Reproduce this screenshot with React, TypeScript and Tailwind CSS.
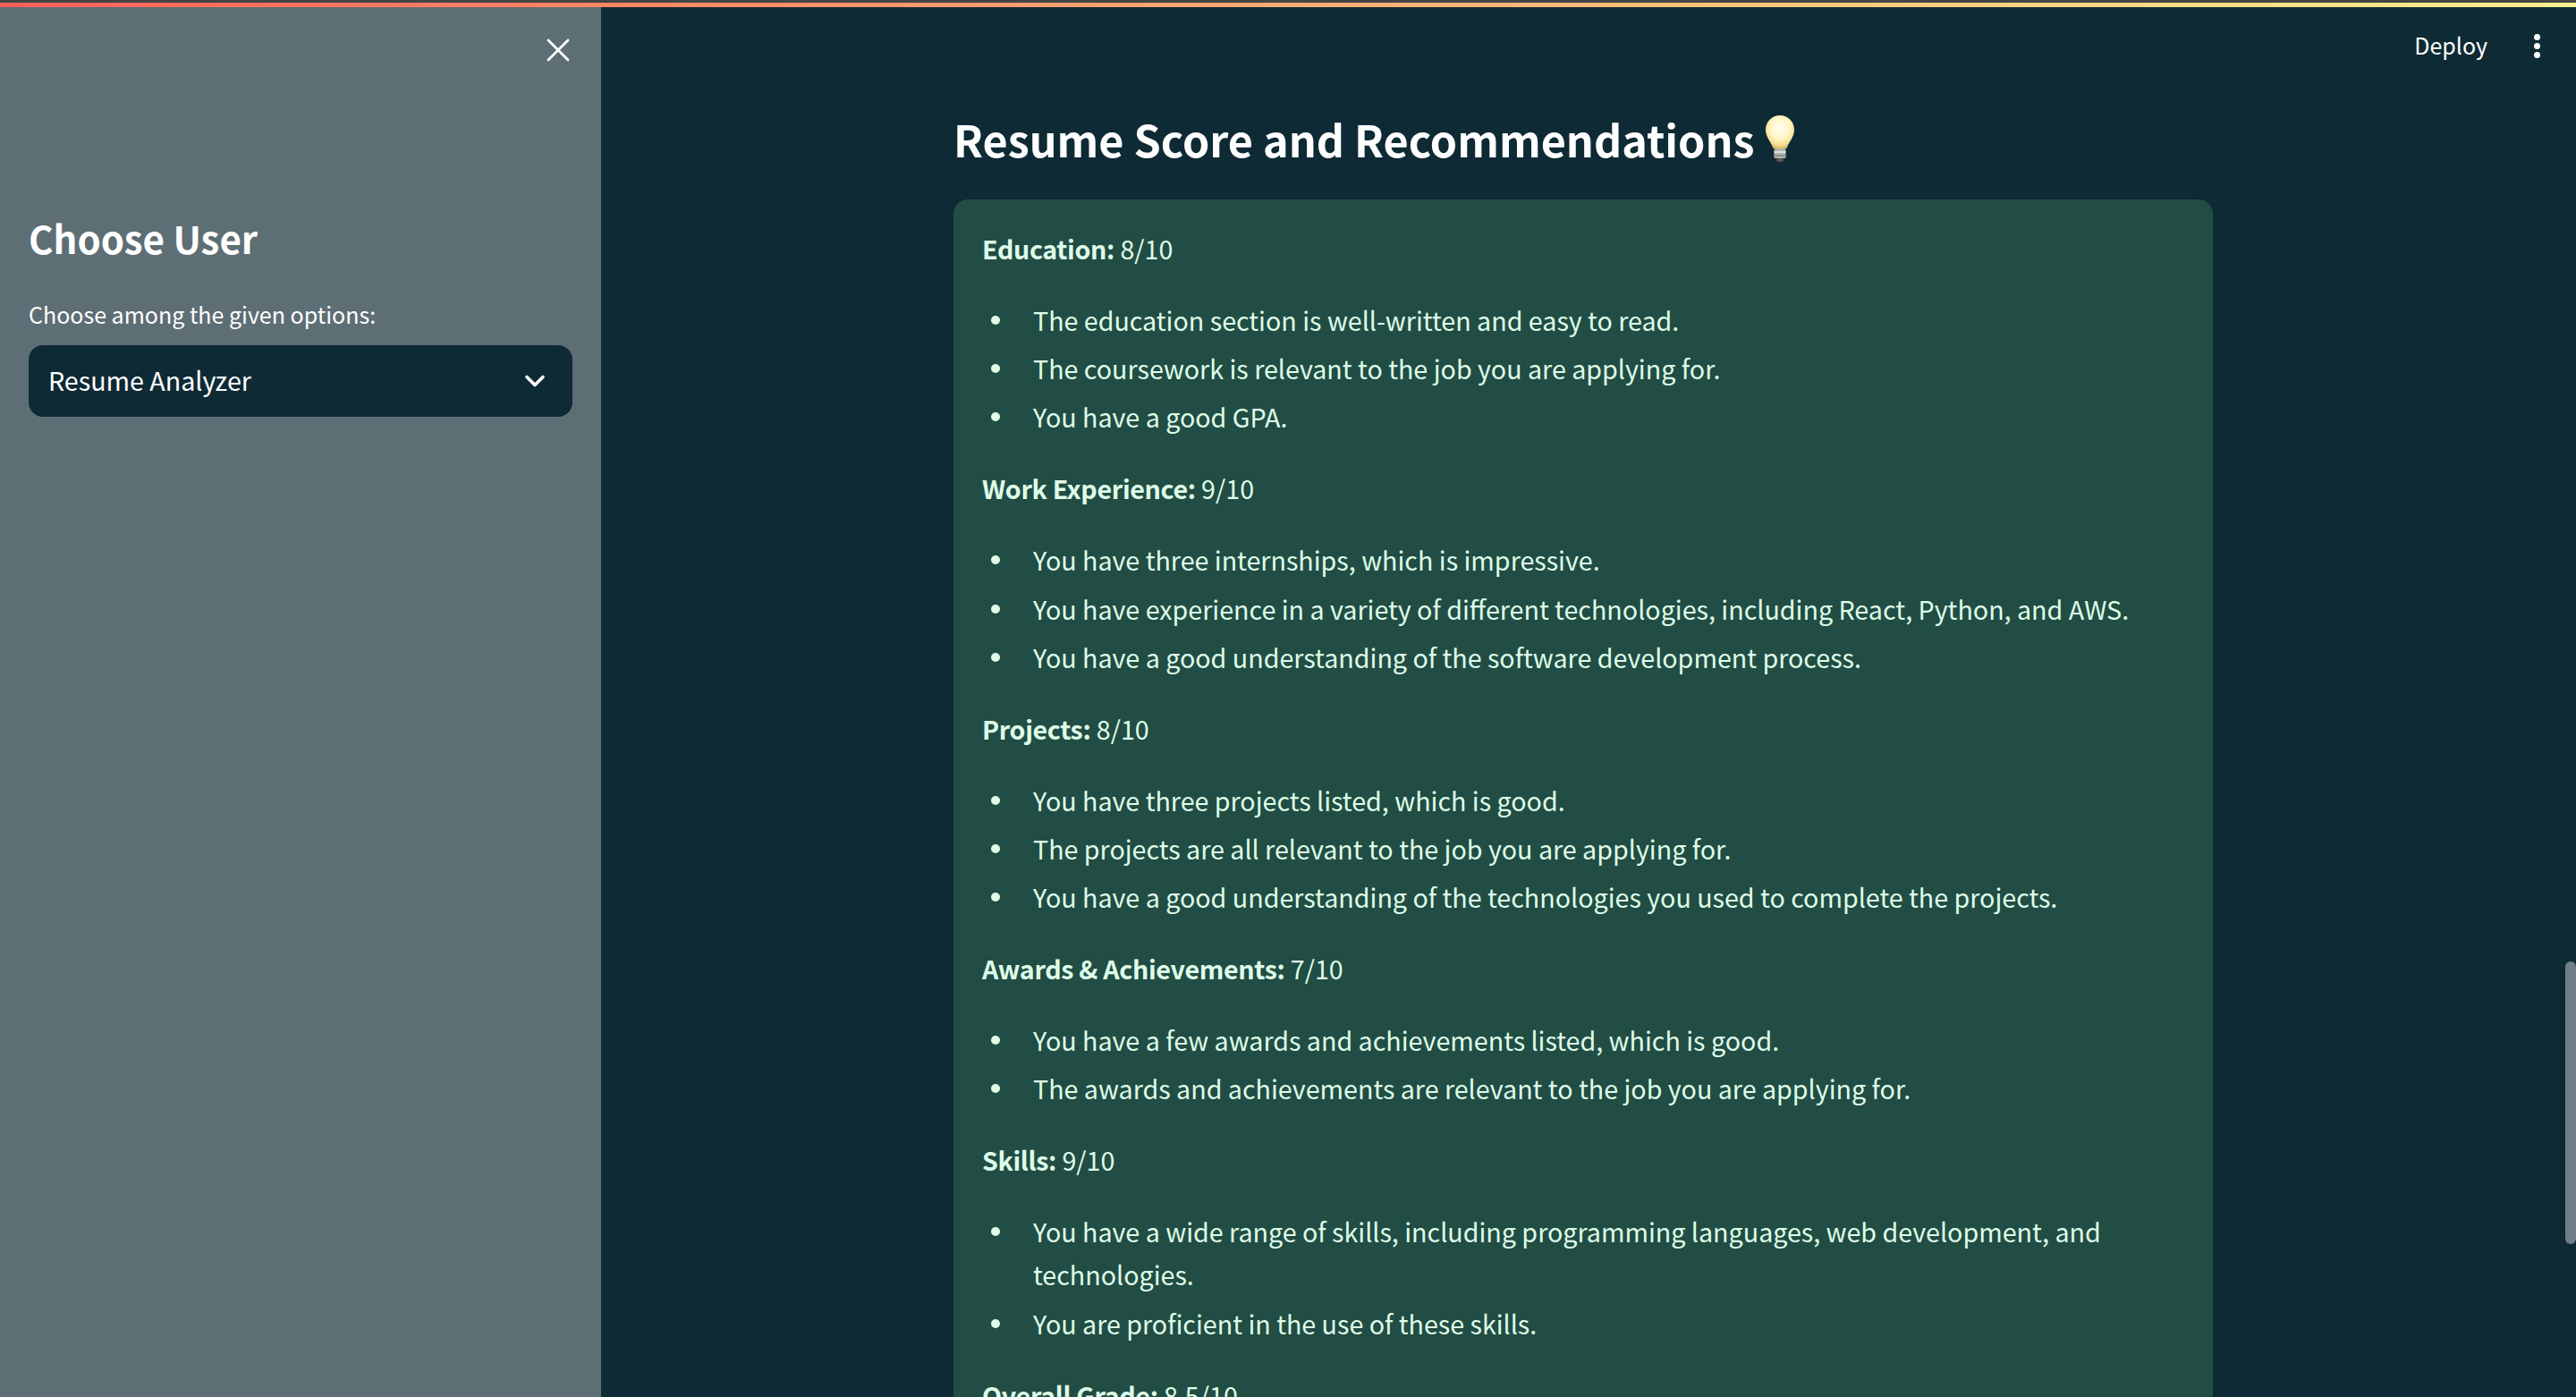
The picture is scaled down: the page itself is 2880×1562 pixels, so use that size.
import { ChevronDown, X } from "lucide-react";

const font = "font-['Noto_Sans_CJK_SC','Source_Sans_Pro',sans-serif]";

const sections = [
  {
    title: "Education:",
    score: "8/10",
    items: [
      "The education section is well-written and easy to read.",
      "The coursework is relevant to the job you are applying for.",
      "You have a good GPA.",
    ],
  },
  {
    title: "Work Experience:",
    score: "9/10",
    items: [
      "You have three internships, which is impressive.",
      "You have experience in a variety of different technologies, including React, Python, and AWS.",
      "You have a good understanding of the software development process.",
    ],
  },
  {
    title: "Projects:",
    score: "8/10",
    items: [
      "You have three projects listed, which is good.",
      "The projects are all relevant to the job you are applying for.",
      "You have a good understanding of the technologies you used to complete the projects.",
    ],
  },
  {
    title: "Awards & Achievements:",
    score: "7/10",
    items: [
      "You have a few awards and achievements listed, which is good.",
      "The awards and achievements are relevant to the job you are applying for.",
    ],
  },
  {
    title: "Skills:",
    score: "9/10",
    items: [
      "You have a wide range of skills, including programming languages, web development, and technologies.",
      "You are proficient in the use of these skills.",
    ],
  },
];

function Bulb() {
  return (
    <svg width="32" height="52" viewBox="0 0 32 52" className="ml-[12px] shrink-0">
      <defs>
        <radialGradient id="glass" cx="50%" cy="38%" r="62%">
          <stop offset="0%" stopColor="#fffef2" />
          <stop offset="55%" stopColor="#fff4c4" />
          <stop offset="85%" stopColor="#f6dd8e" />
          <stop offset="100%" stopColor="#d9b765" />
        </radialGradient>
      </defs>
      <path
        d="M16 0C7 0 0 7 0 16c0 8 5 12 8.5 21h15C27 28 32 24 32 16 32 7 25 0 16 0z"
        fill="url(#glass)"
      />
      <rect x="9.5" y="37" width="13" height="11" rx="1.5" fill="#b4b4ae" />
      <rect x="9.5" y="40" width="13" height="2" fill="#e0e0da" />
      <rect x="9.5" y="44" width="13" height="2" fill="#8f8f8a" />
      <rect x="12" y="48" width="8" height="4" rx="2" fill="#55544f" />
    </svg>
  );
}

export default function App() {
  return (
    <div className={`flex h-[1562px] flex-col overflow-hidden bg-[#0e2a35] text-white ${font}`}>
      <div className="h-[3px] bg-[#444444]" />
      <div className="h-[5px] bg-gradient-to-r from-[#f5605a] to-[#fdf08c]" />

      <div className="relative flex min-h-0 flex-1">
        {/* sidebar */}
        <aside className="flex w-[672px] shrink-0 flex-col bg-[#5e6e75] px-[32px]">
          <div className="-mr-[6px] flex justify-end pt-[26px]">
            <X size={44} strokeWidth={1.5} />
          </div>
          <h2 className="mt-[158px] text-[42px] leading-[60px] font-semibold">Choose User</h2>
          <label className="mt-[35px] text-[25px] leading-[40px]">Choose among the given options:</label>
          <div className="mt-[15px] flex h-[80px] items-center justify-between rounded-[16px] bg-[#0e2a35] pr-[24px] pl-[22px]">
            <span className="-mt-[2px] text-[28.65px] leading-[40px]">Resume Analyzer</span>
            <ChevronDown size={36} strokeWidth={2.4} />
          </div>
        </aside>

        {/* main */}
        <main className="min-w-0 flex-1 pl-[394px]">
          <div className="w-[1408px] pt-[112px]">
            <h3 className="flex h-[70px] items-center text-[48.5px] leading-[70px] font-semibold">
              Resume Score and Recommendations
              <Bulb />
            </h3>
            <div className="mt-[33px] rounded-[16px] bg-[#224d44] px-[32px] pt-[31px] pb-[32px] text-[28.65px] leading-[48px] text-[#dffde9]">
              {sections.map((s) => (
                <div key={s.title}>
                  <p className="mb-[32px]">
                    <strong className="font-semibold tracking-[-0.35px]">{s.title}</strong> {s.score}
                  </p>
                  <ul className="mb-[32px]">
                    {s.items.map((item) => (
                      <li key={item} className="mb-[6.2px] flex">
                        <span className="mt-[19px] mr-[37px] ml-[10px] size-[10px] shrink-0 rounded-full bg-[#dffde9]" />
                        <span>{item}</span>
                      </li>
                    ))}
                  </ul>
                </div>
              ))}
              <p>
                <strong className="font-semibold tracking-[-0.35px]">Overall Grade:</strong> 8.5/10
              </p>
            </div>
          </div>
        </main>

        {/* toolbar + scrollbar overlay */}
        <div className="absolute top-[25px] right-[40px] flex items-center gap-[52px]">
          <span className="-mt-[3px] text-[25px] leading-[40px]">Deploy</span>
          <div className="flex flex-col gap-[3px]">
            <span className="size-[7px] rounded-full bg-white" />
            <span className="size-[7px] rounded-full bg-white" />
            <span className="size-[7px] rounded-full bg-white" />
          </div>
        </div>
        <div className="absolute top-[1067px] right-0 h-[316px] w-[12px] rounded-[6px] bg-[#6f7f87]" />
      </div>
    </div>
  );
}
